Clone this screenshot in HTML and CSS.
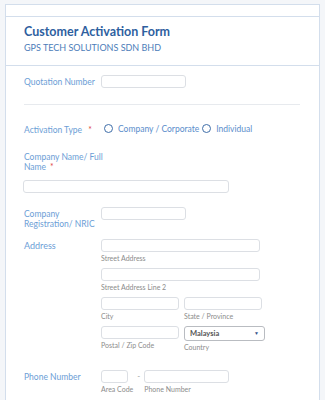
FILE: index.html
```html
<!DOCTYPE html>
<html lang="en">
<head>
  <meta charset="UTF-8">
  <meta name="viewport" content="width=device-width, initial-scale=1.0">
  <title>Customer Activation Form</title>
  <link rel="stylesheet" href="styles.css">
</head>
<body>

  <div class="form-card">
    <div class="card-top"></div>

    <div class="form-header">
      <h2>Customer Activation Form</h2>
      <p>GPS TECH SOLUTIONS SDN BHD</p>
    </div>

    <form class="form-body">
      <div class="row quote-row">
        <label class="row-label" for="quoteNo">Quotation Number</label>
        <input class="box w-md" type="text" id="quoteNo">
      </div>

      <div class="divider"></div>

      <div class="row type-row">
        <span class="row-label">Activation Type <span class="req">*</span></span>
        <div class="radios">
          <span class="radio"></span><span class="radio-text">Company / Corporate</span>
          <span class="radio"></span><span class="radio-text">Individual</span>
        </div>
      </div>

      <div class="block name-row">
        <label class="row-label wrap" for="compName">Company Name/ Full Name<span class="req">*</span></label>
        <input class="box w-lg" type="text" id="compName">
      </div>

      <div class="row reg-row">
        <label class="row-label" for="regNo">Company Registration/ NRIC</label>
        <input class="box w-md" type="text" id="regNo">
      </div>

      <div class="row addr-row">
        <span class="row-label">Address</span>
        <div class="addr">
          <div class="field">
            <input class="box w-xl" type="text">
            <span class="sub">Street Address</span>
          </div>
          <div class="field">
            <input class="box w-xl" type="text">
            <span class="sub">Street Address Line 2</span>
          </div>
          <div class="pair">
            <div class="field">
              <input class="box w-half" type="text">
              <span class="sub">City</span>
            </div>
            <div class="field">
              <input class="box w-half" type="text">
              <span class="sub">State / Province</span>
            </div>
          </div>
          <div class="pair">
            <div class="field">
              <input class="box w-half" type="text">
              <span class="sub">Postal / Zip Code</span>
            </div>
            <div class="field">
              <div class="select">Malaysia <span class="arrow">&#9660;</span></div>
              <span class="sub">Country</span>
            </div>
          </div>
        </div>
      </div>

      <div class="row phone-row">
        <span class="row-label">Phone Number</span>
        <div class="phone">
          <div class="field">
            <input class="box w-area" type="text">
            <span class="sub">Area Code</span>
          </div>
          <span class="dash">-</span>
          <div class="field">
            <input class="box w-phone" type="text">
            <span class="sub">Phone Number</span>
          </div>
        </div>
      </div>
    </form>
  </div>

</body>
</html>
```

FILE: styles.css
```css
body {
  margin: 0;
  padding: 4px 5px 0 5px;
  background-color: #f4f6f9;
  font-family: Lato, "Open Sans", sans-serif;
}

.form-card {
  background-color: #fff;
  border: 1px solid #d3deec;
  border-bottom: none;
  height: 400px;
}

.card-top {
  height: 11px;
  border-bottom: 1px solid #d3deec;
}

.form-header {
  height: 49px;
  padding: 0 18px;
  border-bottom: 1px solid #d3deec;
  box-sizing: border-box;
}

h2 {
  margin: 0;
  padding-top: 7px;
  font-size: 12.5px;
  color: #2e5f9f;
}

.form-header p {
  margin: 3px 0 0 0;
  font-size: 9px;
  color: #4d7db9;
}

.form-body {
  padding: 0 18px;
}

.row {
  display: flex;
  align-items: flex-start;
}

.row-label {
  width: 77px;
  flex-shrink: 0;
  font-size: 8.5px;
  line-height: 10px;
  color: #6c9ed6;
}

.req {
  color: #e04848;
  margin-left: 4px;
}

/* text boxes */
.box {
  display: block;
  height: 13px;
  padding: 0;
  margin: 0;
  border: 1px solid #dcdfe4;
  border-radius: 3px;
  box-sizing: border-box;
  background: #fff;
}

.w-md { width: 85px; }
.w-lg { width: 206px; }
.w-xl { width: 159px; }
.w-half { width: 78px; }
.w-area { width: 27px; }
.w-phone { width: 85px; }

.quote-row {
  margin-top: 9px;
  align-items: center;
}

.divider {
  margin: 16px 1px 0 0;
  border-top: 1px solid #e7eaee;
}

.type-row {
  margin-top: 17px;
  align-items: center;
}

.type-row .row-label {
  padding-top: 3px;
}

.radios {
  display: flex;
  align-items: center;
}

.radio {
  width: 7px;
  height: 7px;
  border: 1.5px solid #3f6ea9;
  border-radius: 50%;
  margin: 0 5px 0 3px;
}

.radio-text {
  font-size: 8.5px;
  color: #5a8dcb;
  margin-right: 0;
}

.name-row {
  margin-top: 17px;
}

.wrap {
  display: block;
  width: 86px;
}

.name-row .box {
  margin-top: 8px;
  margin-left: -1px;
}

.reg-row {
  margin-top: 14px;
}

.reg-row .row-label {
  padding-top: 2px;
}

.addr-row {
  margin-top: 10px;
}

.addr-row .row-label {
  padding-top: 2px;
  font-size: 9px;
}

.field {
  display: flex;
  flex-direction: column;
}

.sub {
  font-size: 7px;
  line-height: 9px;
  margin-top: 2px;
  color: #8c8c8c;
}

.addr .field {
  margin-bottom: 5px;
}

.pair {
  display: flex;
  gap: 5px;
}

.select {
  width: 81px;
  height: 15px;
  border: 1px solid #b9bcc1;
  border-radius: 3px;
  box-sizing: border-box;
  padding: 0 5px;
  font-size: 7.5px;
  line-height: 13px;
  color: #555;
  font-weight: bold;
  display: flex;
  justify-content: space-between;
}

.arrow {
  font-size: 5px;
  color: #34568a;
}

.phone-row {
  margin-top: 13px;
}

.phone-row .row-label {
  padding-top: 2px;
}

.phone {
  display: flex;
  align-items: flex-start;
}

.dash {
  font-size: 8px;
  line-height: 13px;
  color: #999;
  margin: 0 4px;
}
```
